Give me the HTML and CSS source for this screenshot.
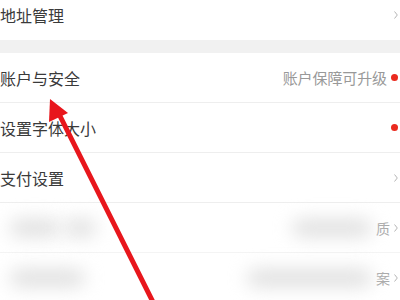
FILE: index.html
```html
<!DOCTYPE html>
<html lang="zh">
<head>
<meta charset="utf-8">
<link rel="stylesheet" href="styles.css">
</head>
<body>
<div class="page">
  <div class="list top">
    <div class="row">
      <span class="label">地址管理</span>
      <span class="right"><svg class="chev" viewBox="0 0 4 8"><path d="M0.5 0.5 L3.3 4 L0.5 7.5" /></svg></span>
    </div>
  </div>
  <div class="band"></div>
  <div class="list">
    <div class="row">
      <span class="label">账户与安全</span>
      <span class="right"><span class="hint">账户保障可升级</span><span class="dot"></span></span>
    </div>
    <div class="row">
      <span class="label">设置字体大小</span>
      <span class="right"><span class="dot"></span></span>
    </div>
    <div class="row">
      <span class="label">支付设置</span>
      <span class="right"><svg class="chev" viewBox="0 0 4 8"><path d="M0.5 0.5 L3.3 4 L0.5 7.5" /></svg></span>
    </div>
    <div class="row blurred">
      <span class="blobs"><span class="blob b1"></span><span class="blob b2"></span></span>
      <span class="blob b3"></span>
      <span class="right"><span class="hint soft">质</span><svg class="chev" viewBox="0 0 4 8"><path d="M0.5 0.5 L3.3 4 L0.5 7.5" /></svg></span>
    </div>
    <div class="row blurred">
      <span class="blobs"><span class="blob b4"></span></span>
      <span class="blob b5"></span>
      <span class="right"><span class="hint soft">案</span><svg class="chev" viewBox="0 0 4 8"><path d="M0.5 0.5 L3.3 4 L0.5 7.5" /></svg></span>
    </div>
  </div>
  <svg class="arrow" viewBox="0 0 400 300" width="400" height="300">
    <line x1="60" y1="116" x2="157" y2="310" stroke="#e8161c" stroke-width="5" />
    <polygon points="50,99 68,113 49,122" fill="#e8161c" />
  </svg>
</div>
</body>
</html>
```
FILE: styles.css
```css
html, body {
  margin: 0;
  padding: 0;
  background: #fff;
}
.page {
  position: relative;
  width: 400px;
  height: 300px;
  overflow: hidden;
  font-family: "Noto Sans CJK SC", "Noto Sans", sans-serif;
}
.list {
  display: flex;
  flex-direction: column;
}
.list.top {
  margin-top: -10px;
}
.row {
  height: 49px;
  border-bottom: 1px solid #eeeeee;
  display: flex;
  align-items: center;
  justify-content: space-between;
  padding: 0 2px 0 0;
}
.list.top .row {
  border-bottom: none;
  height: 50px;
}
.list .row:last-child {
  border-bottom: none;
}
.label {
  font-size: 16px;
  color: #3a3a3a;
  line-height: 1;
}
.right {
  display: flex;
  align-items: center;
  gap: 4px;
}
.hint {
  font-size: 15px;
  color: #999;
  line-height: 1;
  letter-spacing: -0.1px;
}
.hint.soft {
  font-size: 14px;
  color: #aaa;
}
.dot {
  width: 7px;
  height: 7px;
  border-radius: 50%;
  background: #ea2a1f;
}
.chev {
  width: 4px;
  height: 8px;
  fill: none;
  stroke: #b5b5b5;
  stroke-width: 1;
}
.band {
  height: 13px;
  background: #f1f1f1;
}
.blurred {
  border-bottom-color: #f4f4f4;
}
.blobs {
  display: flex;
  gap: 4px;
  padding-left: 10px;
}
.blob {
  display: block;
  height: 18px;
  background: #e0e0e0;
  filter: blur(9px);
  border-radius: 9px;
}
.b1 { width: 50px; }
.b2 { width: 32px; }
.b3 { width: 80px; margin-left: auto; margin-right: 4px; }
.b4 { width: 75px; }
.b5 { width: 125px; margin-left: auto; margin-right: 4px; }
.arrow {
  position: absolute;
  left: 0;
  top: 0;
}
```
